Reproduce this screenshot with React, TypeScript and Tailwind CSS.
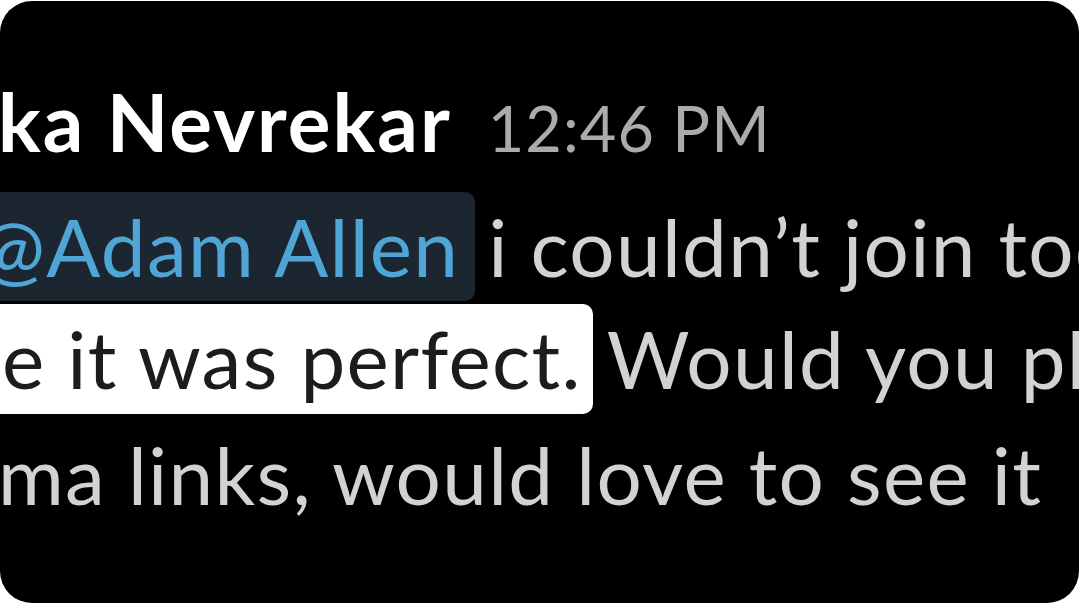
export default function App() {
    return (
        <div className="w-[1081px] h-[605px] bg-white pt-[1px]">
            <div
                className="w-[1079px] h-[602px] bg-black rounded-[32px] overflow-hidden pt-[65px]"
                style={{ fontFamily: "Lato, 'Open Sans', sans-serif" }}
            >
                {/* author + time */}
                <div className="flex items-baseline whitespace-nowrap h-[110px] leading-[110px]">
                    <span className="text-[80px] font-bold text-white tracking-[2px] -ml-[2px]">ka Nevrekar</span>
                    <span className="text-[63px] text-[#ababad] tracking-[1.1px] ml-[36px]">12:46 PM</span>
                </div>

                {/* message */}
                <div className="mt-[16px] text-[80px] leading-[109px] tracking-[1.3px] text-[#d1d2d3] whitespace-nowrap">
                    <div className="flex h-[109px]">
                        <span className="bg-[#1c2631] text-[#4ea5d6] rounded-[10px] -ml-[26px] pl-[4px] pr-[16px]">
                            @Adam Allen
                        </span>
                        <span className="ml-[13px]">i couldn’t join today</span>
                    </div>
                    <div className="flex h-[110px] mt-[3px]">
                        <span className="bg-white text-[#1d1c1d] rounded-[10px] -ml-[10px] pl-[12px] pr-[11px]">
                            e it was perfect.
                        </span>
                        <span className="ml-[14px]">Would you please</span>
                    </div>
                    <div className="flex h-[109px] mt-[6px]">
                        <span className="-ml-[2px]">ma links, would love to see it</span>
                    </div>
                </div>
            </div>
        </div>
    );
}
